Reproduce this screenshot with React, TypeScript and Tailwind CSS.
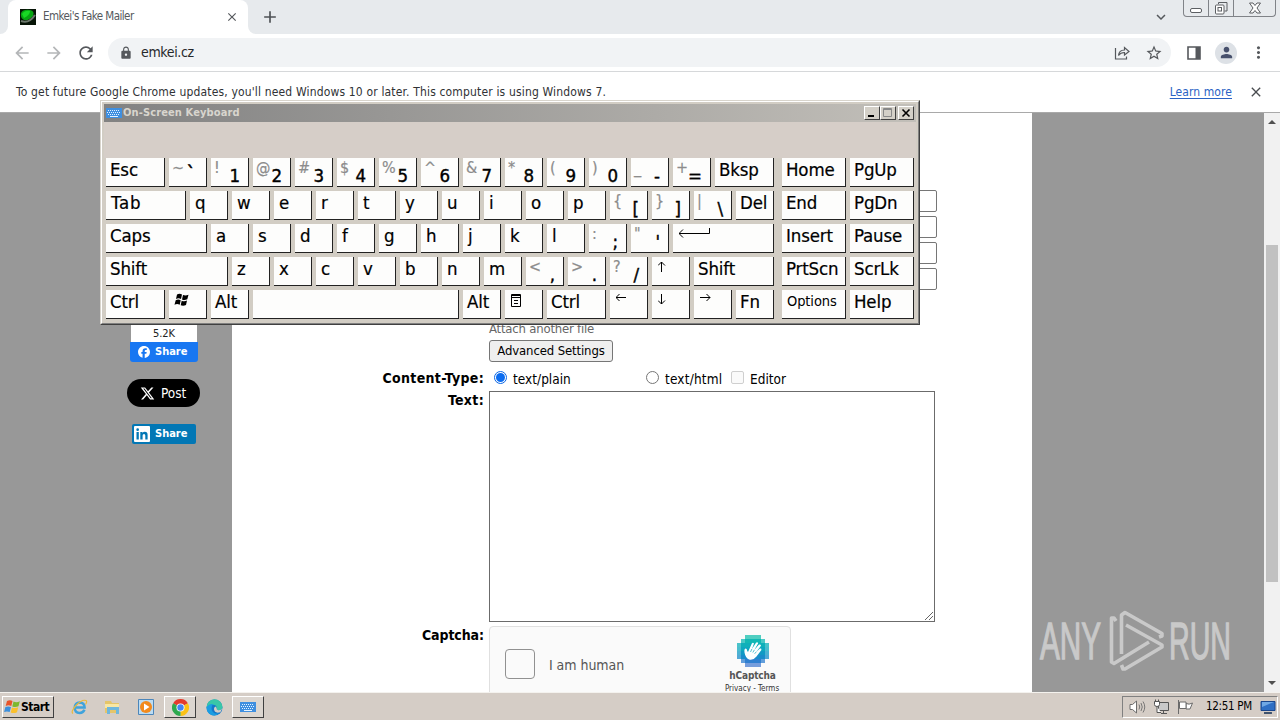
import type { ReactNode } from "react";
import {
  MdAdd,
  MdArrowBack,
  MdArrowForward,
  MdClose,
  MdKeyboardArrowDown,
  MdLock,
  MdMoreVert,
  MdPerson,
  MdRefresh,
  MdStarBorder,
} from "react-icons/md";
import { FaFacebook, FaXTwitter } from "react-icons/fa6";

type KeyDef = {
  w: string;
  label?: string;
  shift?: string;
  icon?: ReactNode;
  small?: boolean;
};

const W1 = "w-[38px]";
const W59 = "w-[59px]";

const arrow = (d: string, w = 12) => (
  <svg width={w} height="12" viewBox={`0 0 ${w} 12`} fill="none" stroke="#000" className="mt-[3px] ml-[6px]">
    <path d={d} />
  </svg>
);

const WinKey = (
  <svg width="16" height="14" viewBox="0 0 16 14" className="mt-[3px] ml-[5px]">
    <path d="M3 1.5Q5.500 .2 8 1.500L7 6Q4.500 4.700 2 6ZM9 2Q11.500 3 14.500 1.800L13.300 6.200Q10.500 7.500 8 6.400ZM1.700 7.200Q4.200 6 6.700 7.200L5.700 11.700Q3.200 10.400 .5 11.700ZM7.700 7.700Q10.300 8.800 13 7.600L12 12Q9.200 13.200 6.700 12.200Z" />
  </svg>
);

const MenuKey = (
  <svg width="12" height="14" viewBox="0 0 12 14" fill="none" stroke="#000" className="mt-[4px] ml-[6px]">
    <path d="M.5.5h9v12h-9zM1 1.500h8M1 3.500h8M3 6.500h4M3 9.500h4" />
  </svg>
);

const k = (label: string, w = W1): KeyDef => ({ label, w });
const s = (shift: string, label: string): KeyDef => ({ shift, label, w: W1 });

const rows: KeyDef[][] = [
  [
    k("Esc", W59), s("~", "`"), s("!", "1"), s("@", "2"), s("#", "3"), s("$", "4"), s("%", "5"),
    s("^", "6"), s("&", "7"), s("*", "8"), s("(", "9"), s(")", "0"), s("_", "-"), s("+", "="), k("Bksp", W59),
  ],
  [
    k("Tab", "w-[80px]"), ..."qwertyuiop".split("").map((c) => k(c)),
    s("{", "["), s("}", "]"), s("|", "\\"), k("Del"),
  ],
  [
    k("Caps", "w-[101px]"), ..."asdfghjkl".split("").map((c) => k(c)),
    s(":", ";"), s('"', "'"), { w: "w-[101px]", icon: arrow("M30.500 1v5.500H0M4 2.500l-4 4 4 4", 33) },
  ],
  [
    k("Shift", "w-[122px]"), ..."zxcvbnm".split("").map((c) => k(c)),
    s("<", ","), s(">", "."), s("?", "/"), { w: W1, icon: arrow("M3.500 12V2M0 5.500l3.500-3.500 3.500 3.500") }, k("Shift", "w-[80px]"),
  ],
  [
    k("Ctrl", W59), { w: W1, icon: WinKey }, k("Alt"), { w: "w-[206px]" }, k("Alt"), { w: W1, icon: MenuKey },
    k("Ctrl", W59), { w: W1, icon: arrow("M10 4.500H0M3.500 1l-3.500 3.500 3.500 3.500") },
    { w: W1, icon: arrow("M3.500 1v10M0 7.500l3.500 3.500 3.500-3.500") },
    { w: W1, icon: arrow("M0 4.500h10M6.500 1l3.500 3.500-3.500 3.500") }, k("Fn"),
  ],
];

const sideKeys: KeyDef[] = [
  k("Home"), k("PgUp"), k("End"), k("PgDn"), k("Insert"), k("Pause"),
  k("PrtScn"), k("ScrLk"), { w: W1, label: "Options", small: true }, k("Help"),
].map((key) => ({ ...key, w: "w-16" }));

function labelStyle({ label, small }: KeyDef) {
  if (small) return "pl-[5px] text-[14.500px] leading-[23px] tracking-[-0.100px] [-webkit-text-stroke:0]";
  if (label === "Tab") return "pl-[5px] tracking-[0.800px]";
  if (label?.length === 1) return "pl-[5px]";
  return "pl-1 tracking-[-0.150px]";
}

function Key(key: KeyDef) {
  const { w, label, shift, icon } = key;
  return (
    <div className={`${w} h-[29px] shrink-0 overflow-hidden border-r border-b border-[#222] bg-[#fdfdfc] text-[18.500px] leading-[24px] text-black [-webkit-text-stroke:0.200px]`}>
      {icon}
      {shift ? (
        <div className="flex justify-between pr-2 pl-[3px]">
          <span className="text-[16px] leading-[20px] text-[#8c8c8c]">{shift}</span>
          <span className={label === "`" ? "pt-[3px] pr-[3px] [-webkit-text-stroke:0.600px]" : "pt-[6px] [-webkit-text-stroke:0.400px]"}>
            {label}
          </span>
        </div>
      ) : (
        label && <div className={labelStyle(key)}>{label}</div>
      )}
    </div>
  );
}

function KeyboardIcon() {
  return (
    <svg width="16" height="10" viewBox="0 0 16 10" shapeRendering="crispEdges">
      <rect width="16" height="10" fill="#3f8fe0" />
      <path d="M2 2.500h12M1 4.500h13" stroke="#e4f2ff" strokeDasharray="1 1" />
      <path d="M2 6.500h12" stroke="#e4f2ff" strokeDasharray="1 1" />
      <path d="M4 8.500h8" stroke="#e4f2ff" />
    </svg>
  );
}

function CaptionButton({ children }: { children: ReactNode }) {
  return (
    <div className="flex h-[14px] w-4 items-center justify-center border border-t-white border-r-[#404040] border-b-[#404040] border-l-white bg-[#d4d0c8]">
      {children}
    </div>
  );
}

function OnScreenKeyboard() {
  return (
    <div className="absolute top-[100px] left-[100px] flex h-[225px] w-[820px] flex-col border border-t-[#d8d4cc] border-r-[#404040] border-b-[#404040] border-l-[#d8d4cc] bg-[#d2cdc4]">
      <div className="flex h-[223px] flex-col border border-t-white border-r-[#808080] border-b-[#808080] border-l-white px-[2px] pt-[2px]">
        <div className="flex h-[18px] shrink-0 items-center bg-linear-to-r from-[#828282] to-[#c2bfb9] pr-[2px] pl-[2px]">
          <KeyboardIcon />
          <span className="ml-px text-[11px] font-bold tracking-[0.120px] text-[#d8d5ce]">On-Screen Keyboard</span>
          <div className="ml-auto flex">
            <CaptionButton>
              <svg width="10" height="10"><path d="M1 8h6" stroke="#000" strokeWidth="2" /></svg>
            </CaptionButton>
            <CaptionButton>
              <svg width="10" height="10" fill="none" stroke="#888"><path d="M.5.5h8v8h-8zM1 1.500h8" /></svg>
            </CaptionButton>
            <div className="w-[2px]" />
            <CaptionButton>
              <svg width="10" height="10"><path d="M1.500 1.500l7 7M8.500 1.500l-7 7" stroke="#000" strokeWidth="1.600" /></svg>
            </CaptionButton>
          </div>
        </div>
        <div className="h-9 shrink-0 bg-[#d6cec8]" />
        <div className="flex pl-[2px]">
          <div className="flex w-[668px] flex-col gap-1">
            {rows.map((row, i) => (
              <div key={i} className="flex gap-1">
                {row.map((key, j) => (
                  <Key key={j} {...key} />
                ))}
              </div>
            ))}
          </div>
          <div className="ml-2 grid grid-cols-[64px_64px] content-start gap-1">
            {sideKeys.map((key) => (
              <Key key={key.label} {...key} />
            ))}
          </div>
        </div>
      </div>
    </div>
  );
}

function TabStrip() {
  return (
    <div className="flex h-[34px] shrink-0 bg-[#e7eaed]">
      <div className="flex w-2 items-end bg-white">
        <div className="h-full w-2 rounded-br-lg bg-[#e7eaed]" />
      </div>
      <div className="flex w-[240px] items-center rounded-t-lg bg-white pr-[9px] pl-3">
        <svg width="16" height="16" viewBox="0 0 16 16">
          <rect width="16" height="16" fill="#071407" />
          <path d="M1 4Q3 0 10 1Q15 2 13 7Q9 12 4 11Q0 9 1 4Z" fill="#07a512" />
          <path d="M2 5Q5 1 10 2Q10 6 4 9Z" fill="#18d824" />
          <path d="M1 12Q9 15 15 6" fill="none" stroke="#6d786d" strokeWidth="2" />
        </svg>
        <span className="ml-[7px] text-[11.500px] tracking-[-0.550px] text-[#55585c]">Emkei's Fake Mailer</span>
        <MdClose className="ml-auto size-[14px] text-[#55585c]" />
      </div>
      <div className="w-2 bg-white">
        <div className="h-full w-2 rounded-bl-lg bg-[#e7eaed]" />
      </div>
      <MdAdd className="mt-[7px] ml-1 size-5 text-[#4f5256]" />
      <MdKeyboardArrowDown className="mt-[8px] ml-auto size-[18px] text-[#55585c]" />
      <div className="mr-[4px] ml-[13px] flex h-[17px] w-[93px] rounded-b-[4px] border border-t-0 border-[#808388] text-[#5c5f63]">
        <div className="flex w-[25px] justify-center border-r border-[#808388]">
          <svg width="14" height="16" fill="none" stroke="currentColor"><rect x="1.500" y="8.500" width="11" height="4" rx="1.500" fill="#fff" /></svg>
        </div>
        <div className="flex w-[25px] justify-center border-r border-[#808388]">
          <svg width="14" height="16" fill="none" stroke="currentColor">
            <path d="M4.500 4V2.500h8.500v8.500h-2.500" />
            <rect x="1.500" y="5" width="8.500" height="9" rx="1" fill="#fff" />
            <rect x="4" y="7.500" width="3.500" height="3.500" />
          </svg>
        </div>
        <div className="flex flex-1 justify-center">
          <svg width="14" height="16" fill="#fff" stroke="currentColor">
            <path d="M1.500 3h3.500l2 2.500 2-2.500h3.500l-3.500 5 3.500 5h-3.500l-2-2.500-2 2.500H1.500l3.500-5z" />
          </svg>
        </div>
      </div>
    </div>
  );
}

function Toolbar() {
  return (
    <div className="flex h-[38px] shrink-0 items-center border-b border-[#d6d8da] bg-white text-[#55585c]">
      <MdArrowBack className="ml-[12px] size-5 text-[#b4b6b8]" />
      <MdArrowForward className="ml-3 size-5 text-[#b4b6b8]" />
      <MdRefresh className="ml-3 size-5" />
      <div className="ml-3 flex h-[29px] w-[1063px] items-center rounded-full bg-[#f1f3f5]">
        <MdLock className="ml-[11px] size-[14px]" />
        <span className="ml-2 text-[14px] tracking-[-0.350px] text-[#26282b]">emkei.cz</span>
        <svg width="16" height="16" viewBox="0 0 16 16" fill="none" stroke="currentColor" strokeWidth="1.200" className="ml-auto">
          <path d="M1.500 3v11h11v-2.500" />
          <path d="M4.500 10.500Q5 5 10.500 5V2.500L15 6.500l-4.500 3.500V7.500Q6.500 7.500 4.500 10.500Z" />
        </svg>
        <MdStarBorder className="mr-[8px] ml-[15px] size-[18px]" />
      </div>
      <svg width="14" height="14" className="ml-4"><path d="M1 1h12v12H1z" fill="none" stroke="currentColor" strokeWidth="1.600" /><path d="M8.500 1H13v12H8.500z" fill="currentColor" /></svg>
      <div className="ml-[14px] flex size-[22px] items-center justify-center rounded-full bg-[#dde1e6]">
        <MdPerson className="size-[17px] text-[#47506c]" />
      </div>
      <MdMoreVert className="ml-3 size-[19px]" />
    </div>
  );
}

function InfoBar() {
  return (
    <div className="flex h-10 shrink-0 items-center bg-white pr-4 pl-4 text-[12px] text-[#303235]">
      <span className="tracking-[0.160px]">
        To get future Google Chrome updates, you'll need Windows 10 or later. This computer is using Windows 7.
      </span>
      <span className="ml-auto tracking-[0.080px] text-[#2a62c4] underline underline-offset-2">Learn more</span>
      <MdClose className="ml-4 size-4 text-[#4a4d50]" />
    </div>
  );
}

function SocialColumn() {
  return (
    <div className="flex w-[232px] shrink-0 flex-col bg-[#989898]">
      <div className="mt-[190px] ml-[131px] flex h-[39px] w-[66px] items-end justify-center bg-white text-[11px] leading-4 text-[#222]">
        5.2K
      </div>
      <div className="ml-[130px] flex h-5 w-[68px] items-center rounded-b-[3px] bg-[#1877f2] pl-2 text-[11px] font-bold text-white">
        <FaFacebook className="mr-[5px] size-3" />
        Share
      </div>
      <div className="mt-[17px] ml-[127px] flex h-7 w-[73px] items-center rounded-full bg-black pl-[13px] text-[13.500px] text-white">
        <FaXTwitter className="mr-[6px] size-[15px]" />
        Post
      </div>
      <div className="mt-[17px] ml-[132px] flex h-5 w-16 items-center rounded-[2px] bg-[#0277b5] pl-[2px] text-[11px] font-bold text-white">
        <svg width="16" height="16" viewBox="0 0 16 16" className="mr-[5px]">
          <rect width="16" height="16" rx="1" fill="#fff" />
          <path d="M2.500 6h2.300v7.500H2.500zM2.300 3.700a1.350 1.350 0 1 0 2.700 0a1.350 1.350 0 1 0-2.700 0M6.300 6h2.200v1.100Q9.200 5.800 10.800 5.800Q13.600 5.800 13.600 9v4.500h-2.300V9.500Q11.300 7.900 10 7.900Q8.600 7.900 8.600 9.500v4H6.300z" fill="#0277b5" />
        </svg>
        Share
      </div>
    </div>
  );
}

function HCaptchaLogo() {
  // eight rows of 4px squares: [first column, last column]
  const spans = [[2, 5], [1, 6], [0, 7], [0, 7], [0, 7], [0, 7], [1, 6], [2, 5]];
  const colors = ["#17bfae", "#12b8b4", "#0fb0ba", "#0ea8bf", "#1299c4", "#1a8cca", "#2f7fd0", "#4a7ed2"];
  return (
    <svg width="32" height="32" viewBox="0 0 32 32" className="ml-[2px]">
      {spans.map(([a, b], y) =>
        Array.from({ length: b - a + 1 }, (_, i) => {
          const edge = i === 0 || i === b - a || y === 0 || y === 7;
          return <rect key={`${y}-${i}`} x={(a + i) * 4} y={y * 4} width="4" height="4" fill={colors[y]} opacity={edge ? 0.75 : 1} />;
        })
      )}
      <path
        d="M7.500 17.500Q7 14 8.500 13.600Q9.800 13.500 10.300 16L11 17L14.800 8.500Q16 7.200 17 8.600L14.900 14L19 7.700Q20.500 6.700 21.200 8.300L17.300 15L22 9.600Q23.700 9 24 10.700L19.400 16.700L23 13.600Q24.700 13.400 24.400 15L19.500 21.500Q16.500 25.500 12 24.500Q8.500 23 7.500 17.500Z"
        fill="#fff"
      />
      <path d="M14.900 14L13.500 17M17.300 15L15.800 17.500M19.400 16.700L17.600 18.800" stroke="#0fa6bd" strokeWidth=".7" />
    </svg>
  );
}

function Row({ label, className = "", children }: { label?: string; className?: string; children: ReactNode }) {
  return (
    <div className={`flex ${className}`}>
      <div className="mr-[5px] w-[252px] shrink-0 text-right font-bold">
        <span className={label === "Captcha:" ? "text-[14px] tracking-[-0.080px]" : "text-[14px] tracking-[0.320px]"}>{label}</span>
      </div>
      {children}
    </div>
  );
}

function MailForm() {
  return (
    <div className="w-[800px] shrink-0 bg-white pt-[77px] text-[13.500px] leading-[18px] text-black">
      {["From name", "From e-mail", "To", "Subject"].map((name) => (
        <Row key={name} className="mb-1">
          <input aria-label={name} className="h-[22px] w-[448px] rounded-[2px] border border-[#767676]" />
        </Row>
      ))}
      <Row className="mt-[30px] h-5">
        <span className="text-[13px] tracking-[-0.200px] text-[#666]">Attach another file</span>
      </Row>
      <Row>
        <button className="h-[22px] w-[124px] rounded-[3px] border border-[#767676] bg-[#efefef] text-[13px] leading-5 tracking-[-0.120px]">
          Advanced Settings
        </button>
      </Row>
      <Row label="Content-Type:" className="mt-[7px] h-[22px]">
        <span className="mt-[2px] ml-[5px] flex size-[13px] items-center justify-center rounded-full border border-[#0b66e4]">
          <span className="size-[9px] rounded-full bg-[#0b6cf0]" />
        </span>
        <span className="mt-px ml-[6px] w-[133px] tracking-[0.020px]">text/plain</span>
        <span className="mt-[2px] size-[13px] rounded-full border border-[#767676]" />
        <span className="mt-px ml-[6px] w-[66px] tracking-[0.180px]">text/html</span>
        <span className="mt-[2px] size-[13px] rounded-[2px] border border-[#cfcfcf] bg-[#fafafa]" />
        <span className="mt-px ml-[6px]">Editor</span>
      </Row>
      <Row label="Text:" className="h-[235px]">
        <div className="flex h-[231px] w-[446px] items-end justify-end border border-[#6b6b6b] p-px">
          <svg width="8" height="8" stroke="#666"><path d="M0 8L8 0M4 8l4-4" /></svg>
        </div>
      </Row>
      <Row label="Captcha:">
        <div className="flex h-[78px] w-[302px] rounded-[4px] border border-[#e0e0e0] bg-[#fafafa]">
          <div className="mt-[22px] ml-[15px] size-[30px] rounded-[4px] border border-[#919191] bg-[#fafafa]" />
          <span className="mt-[29px] ml-[14px] text-[14px] tracking-[-0.050px] text-[#555]">I am human</span>
          <div className="mt-2 mr-[7px] ml-auto flex w-[62px] flex-col items-center">
            <HCaptchaLogo />
            <span className="mt-px ml-px text-[10px] leading-[15px] font-bold tracking-[-0.150px] text-[#555]">hCaptcha</span>
            <span className="text-[8px] leading-[12px] whitespace-nowrap text-[#333]">Privacy - Terms</span>
          </div>
        </div>
      </Row>
    </div>
  );
}

function Watermark() {
  return (
    <svg
      width="243"
      height="90"
      viewBox="0 -8 243 90"
      fill="none"
      stroke="#c9c9c9"
      className="absolute top-[600px] left-[1037px]"
    >
      <g fill="#c9c9c9" strokeWidth="1.300" fontFamily="Liberation Sans Narrow, Liberation Sans, sans-serif" fontSize="51">
        <text x="3" y="51" textLength="61" lengthAdjust="spacingAndGlyphs">ANY</text>
        <text x="132" y="51" textLength="62" lengthAdjust="spacingAndGlyphs">RUN</text>
      </g>
      <g strokeWidth="3.600" strokeLinejoin="round">
        <path d="M79 13L77 10H74.500V54L77 55.500L112 34" />
        <path d="M84.500 46V7L88 4.500L125 25.500V28L122 29" />
        <path d="M89 17L125 37V39L88 61H86L84.500 57" />
      </g>
    </svg>
  );
}

function WindowsFlag() {
  return (
    <svg width="17" height="16" viewBox="0 0 17 16">
      <path d="M3 2Q6 .5 8.500 2L7.300 7Q4.500 5.700 1.700 7Z" fill="#e8542a" />
      <path d="M9.500 2.400Q12.500 4 15.800 2.200L14.500 7.200Q11.500 8.700 8.300 7.400Z" fill="#7cb82f" />
      <path d="M1.400 8.100Q4.200 6.800 7 8.100L5.700 13Q3 11.800 .1 13Z" fill="#3c8fdc" />
      <path d="M8 8.500Q11.200 9.800 14.200 8.300L13 13.200Q9.800 14.800 6.700 13.500Z" fill="#fbc02d" />
    </svg>
  );
}

const raised = "border border-t-white border-r-[#404040] border-b-[#404040] border-l-white";

function Taskbar() {
  return (
    <div className="flex h-7 shrink-0 items-center border-t border-[#f4f2ee] bg-[#d5cdc6] pt-px pl-[2px] text-black">
      <div className={`flex h-[22px] w-[52px] items-center ${raised} pl-px text-[12px] font-bold tracking-[-0.500px]`}>
        <WindowsFlag />
        Start
      </div>
      {/* Internet Explorer */}
      <svg width="17" height="16" viewBox="0 0 17 16" className="ml-[17px]" fill="none">
        <path d="M13.500 10.800Q12 14 8.700 14Q3.700 13.700 3.700 8.700Q4 3.500 8.700 3.400Q13.600 3.700 13.600 8.600H4" stroke="#3fa3dc" strokeWidth="2.500" />
        <path d="M2 14.500Q-.5 13 4.500 7Q11 0 15 1.500Q16.500 2.500 14.500 5.500" stroke="#e9b93c" strokeWidth="1.200" />
      </svg>
      {/* Explorer */}
      <svg width="17" height="16" viewBox="0 0 17 16" className="ml-4">
        <path d="M1 2h6l1 2h7v10H1z" fill="#e5c56a" />
        <path d="M1 5h14v4H1z" fill="#f9e7a3" />
        <path d="M3 8h12v7h-3v-4H6v4H3z" fill="#6fb7dd" />
      </svg>
      {/* Media Player */}
      <svg width="16" height="16" viewBox="0 0 16 16" className="ml-[17px]">
        <path d="M.5.500h15v15H.5z" fill="#bcdcf2" stroke="#4c86ba" />
        <circle cx="8" cy="8" r="6" fill="#f28a1c" />
        <path d="M6 4.500L11.500 8L6 11.500z" fill="#fff" />
      </svg>
      <div className={`ml-[10px] flex h-[22px] w-8 items-center justify-center bg-[#dcd6d0] ${raised}`}>
        <svg width="17" height="17" viewBox="0 0 16 16">
          <path d="M8 8L1.070 4A8 8 0 0 1 14.930 4Z" fill="#e33b2e" />
          <path d="M8 8L14.930 4A8 8 0 0 1 8 16Z" fill="#fbc116" />
          <path d="M8 8L8 16A8 8 0 0 1 1.070 4Z" fill="#2da94f" />
          <circle cx="8" cy="8" r="3.800" fill="#fff" />
          <circle cx="8" cy="8" r="3" fill="#4285f4" />
        </svg>
      </div>
      {/* Edge */}
      <svg width="17" height="17" viewBox="0 0 16 16" className="ml-[10px]">
        <circle cx="8" cy="8" r="7.500" fill="#1577c9" />
        <path d="M.5 8A7.500 7.500 0 0 1 15.500 7.500Q15.300 10.500 11.500 10.500Q9.500 10 10 8.500Q10 5.500 6.500 5.500Q2.500 5.500 .5 8Z" fill="#39c6a8" />
        <path d="M.5 8Q2.500 4 7 4.800Q4.500 7 5.500 10.500Q7 14.500 12.500 13.500Q9.500 16.500 5 15Q.5 13 .5 8Z" fill="#1b9de2" />
        <path d="M10 8.500Q9.500 10 11.500 10.500Q14 10.700 15.300 9L13.500 12.500Q8 14 7.500 9.500Q7.500 7.500 9 7Z" fill="#d5cdc6" />
      </svg>
      <div className={`ml-[9px] flex h-[22px] w-8 items-center justify-center bg-[#dcd6d0] ${raised}`}>
        <KeyboardIcon />
      </div>
      <div className="mr-[2px] ml-auto flex h-[22px] w-[156px] items-center border border-t-[#808080] border-r-white border-b-white border-l-[#808080] pl-[6px] text-[11.500px]">
        <svg width="17" height="16" viewBox="0 0 17 16" fill="#fff" stroke="#6d6d6d">
          <path d="M1 5.500h2.500L7.500 2v12L3.500 10.500H1z" />
          <path d="M10 5.500q1.500 2.500 0 5M12 4q2.500 4 0 8M14 2.500q3.500 5.500 0 11" fill="none" strokeWidth=".9" />
        </svg>
        <svg width="16" height="16" viewBox="0 0 16 16" className="ml-[7px]" fill="#fff" stroke="#555">
          <path d="M5.500 3.500h10v8h-10z" fill="#c9c9c9" />
          <path d="M8 14.500h6M10.500 12v2" />
          <path d="M1.500 2.500h5v3q0 2-2.500 2t-2.500-2zM2.500.5v2M5.500.5v2M4 7.500v6h4" />
        </svg>
        <svg width="17" height="16" viewBox="0 0 17 16" className="ml-2" fill="#fff" stroke="#6b6b6b">
          <path d="M9 4.500q3 1.500 6.500-.5l-2.500 6H9z" />
          <path d="M2.500 3h6.500v6.500H2.500zM1.500 1v14" />
        </svg>
        <span className="ml-[12px] w-[54px] whitespace-nowrap tracking-[-0.300px]">12:51 PM</span>
        <svg width="16" height="14" viewBox="0 0 16 14">
          <path d="M1 1.500h14v9H1z" fill="#2f6fc4" stroke="#1a468c" />
          <path d="M2 2h12L2 7z" fill="#70a8e4" />
          <path d="M4 13h8" stroke="#1a3558" strokeWidth="1.600" />
        </svg>
      </div>
    </div>
  );
}

export default function App() {
  return (
    <div className="relative flex h-[720px] w-[1280px] flex-col overflow-hidden bg-white [font-family:'DejaVu_Sans_Condensed','DejaVu_Sans',sans-serif]">
      <TabStrip />
      <Toolbar />
      <InfoBar />
      <div className="flex h-[580px] shrink-0 overflow-hidden border-t border-[#a9a9a9]">
        <SocialColumn />
        <MailForm />
        <div className="w-[232px] shrink-0 bg-[#989898]" />
        <div className="flex w-4 shrink-0 flex-col items-center bg-[#f1f1f1]">
          <svg width="8" height="4" className="mt-[7px]"><path d="M0 4l4-4 4 4z" fill="#505050" /></svg>
          <div className="mt-[121px] h-[337px] w-3 bg-[#c1c1c1]" />
          <svg width="8" height="4" className="mt-auto mb-[7px]"><path d="M0 0l4 4 4-4z" fill="#505050" /></svg>
        </div>
      </div>
      <Taskbar />
      <Watermark />
      <OnScreenKeyboard />
    </div>
  );
}
